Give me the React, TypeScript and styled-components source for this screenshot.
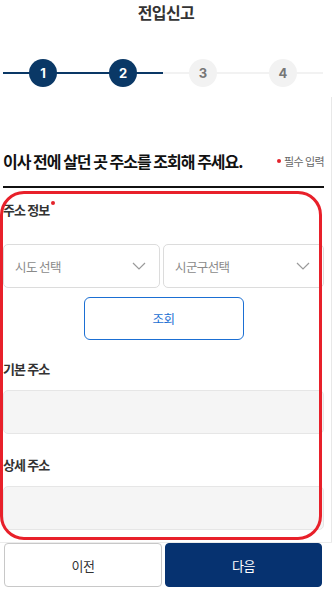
import React from "react";
import styled, {createGlobalStyle} from "styled-components";

const NAVY = "#0a3866";
const FONT = `"Noto Sans CJK KR", "Noto Sans", sans-serif`;

const steps = [1, 2, 3, 4];
const currentStep = 2;

const Chevron = () => (
  <svg width="14" height="8" viewBox="0 0 14 8" fill="none">
    <path d="M1 1l6 6 6-6" stroke="#9a9a9a" strokeWidth="1.2" />
  </svg>
);

const App = () => {
  return (
    <Page>
      <GlobalStyle />
      <Header>
        <Title>전입신고</Title>
      </Header>
      <Stepper>
        {steps.map((n) => (
          <Step key={n} $done={n <= currentStep}>
            <StepCircle $done={n <= currentStep}>{n}</StepCircle>
          </Step>
        ))}
      </Stepper>
      <Body>
        <HeadingRow>
          <Heading>이사 전에 살던 곳 주소를 조회해 주세요.</Heading>
          <Required>필수 입력</Required>
        </HeadingRow>
        <Divider />
        <Form>
          <Label $required>주소 정보</Label>
          <SelectRow>
            <Select>
              <span>시도 선택</span>
              <Chevron />
            </Select>
            <Select>
              <span>시군구선택</span>
              <Chevron />
            </Select>
          </SelectRow>
          <SearchButton>조회</SearchButton>
          <Label $gap={19}>기본 주소</Label>
          <Input />
          <Label $gap={21}>상세 주소</Label>
          <Input />
          <Annotation />
        </Form>
      </Body>
      <Footer>
        <FooterButton>이전</FooterButton>
        <FooterButton $primary>다음</FooterButton>
      </Footer>
    </Page>
  );
};

const GlobalStyle = createGlobalStyle`
  html, body {
    margin: 0;
    padding: 0;
    background: #fff;
  }
  body {
    font-family: ${FONT};
    color: #222;
  }
  * {
    box-sizing: border-box;
  }
`;

const Page = styled.div`
  width: 332px;
  height: 606px;
  display: flex;
  flex-direction: column;
  overflow: hidden;
`;

const Header = styled.div`
  height: 24px;
  display: flex;
  align-items: center;
  justify-content: center;
`;

const Title = styled.h1`
  margin: 0;
  font-size: 16px;
  font-weight: 700;
  color: #333;
  letter-spacing: -0.6px;
`;

const Stepper = styled.div`
  margin-top: 35px;
  padding: 0 9px 0 3px;
  height: 28px;
  display: flex;
`;

const Step = styled.div<{$done: boolean}>`
  flex: 1;
  position: relative;
  display: flex;
  justify-content: center;

  &::before {
    content: "";
    position: absolute;
    left: 0;
    right: 0;
    top: 13px;
    height: 2px;
    background: ${(p) => (p.$done ? NAVY : "#f2f2f2")};
  }
`;

const StepCircle = styled.div<{$done: boolean}>`
  position: relative;
  width: 28px;
  height: 28px;
  border-radius: 50%;
  display: flex;
  align-items: center;
  justify-content: center;
  font-family: "Inter", "Liberation Sans", sans-serif;
  font-size: 13px;
  font-weight: 700;
  background: ${(p) => (p.$done ? NAVY : "#f2f2f2")};
  color: ${(p) => (p.$done ? "#fff" : "#777")};
`;

const Body = styled.div`
  margin-top: 10px;
  flex: 1;
  padding: 51px 7px 0 3px;
  border-right: 1px solid #e8e8e8;
`;

const HeadingRow = styled.div`
  display: flex;
  align-items: center;
  justify-content: space-between;
  height: 26px;
`;

const Heading = styled.h2`
  margin: 0;
  font-size: 16px;
  font-weight: 700;
  color: #111;
  letter-spacing: -1px;
`;

const Required = styled.span`
  font-size: 11px;
  color: #666;
  letter-spacing: -0.6px;
  display: flex;
  align-items: center;

  &::before {
    content: "";
    width: 4px;
    height: 4px;
    border-radius: 50%;
    background: #e3232b;
    margin-right: 3px;
  }
`;

const Divider = styled.div`
  margin-top: 12px;
  height: 2px;
  background: #111;
`;

const Form = styled.div`
  position: relative;
  padding-top: 12px;
  display: flex;
  flex-direction: column;
`;

const Label = styled.div<{$required?: boolean; $gap?: number}>`
  margin-top: ${(p) => p.$gap || 0}px;
  height: 20px;
  line-height: 20px;
  font-size: 13px;
  font-weight: 700;
  color: #333;
  letter-spacing: -0.9px;
  position: relative;
  align-self: flex-start;

  ${(p) =>
    p.$required &&
    `&::after {
      content: "";
      position: absolute;
      right: -6px;
      top: 1px;
      width: 4px;
      height: 4px;
      border-radius: 50%;
      background: #e3232b;
    }`}
`;

const SelectRow = styled.div`
  margin-top: 24px;
  display: grid;
  grid-template-columns: 157px 1fr;
  gap: 3px;
`;

const Select = styled.div`
  height: 44px;
  border: 1px solid #dcdcdc;
  border-radius: 5px;
  display: flex;
  align-items: center;
  justify-content: space-between;
  padding: 0 13px 0 11px;
  font-size: 12.5px;
  color: #8a8a8a;
  letter-spacing: -0.6px;
`;

const SearchButton = styled.button`
  margin: 9px auto 0;
  width: 160px;
  height: 43px;
  border: 1px solid #1b6fd3;
  border-radius: 6px;
  background: #fff;
  color: #1b6fd3;
  font-family: ${FONT};
  font-size: 12.5px;
  letter-spacing: -0.5px;
`;

const Input = styled.div`
  margin-top: 11px;
  height: 44px;
  border: 1px solid #e6e6e6;
  border-radius: 5px;
  background: #f5f5f5;
`;

const Annotation = styled.div`
  position: absolute;
  top: 3px;
  left: -3px;
  right: 2px;
  bottom: -10px;
  border: 3px solid #e8202a;
  border-radius: 24px;
  pointer-events: none;
`;

const Footer = styled.div`
  border-top: 1px solid #ececec;
  padding: 0 10px 19px 4px;
  display: grid;
  grid-template-columns: 158px 1fr;
  gap: 3px;
`;

const FooterButton = styled.button<{$primary?: boolean}>`
  height: 44px;
  border-radius: 4px;
  border: 1px solid ${(p) => (p.$primary ? "#063270" : "#c8c8c8")};
  background: ${(p) => (p.$primary ? "#063270" : "#fff")};
  color: ${(p) => (p.$primary ? "#fff" : "#333")};
  font-family: ${FONT};
  font-size: 13px;
  letter-spacing: -0.5px;
`;

export default App;
